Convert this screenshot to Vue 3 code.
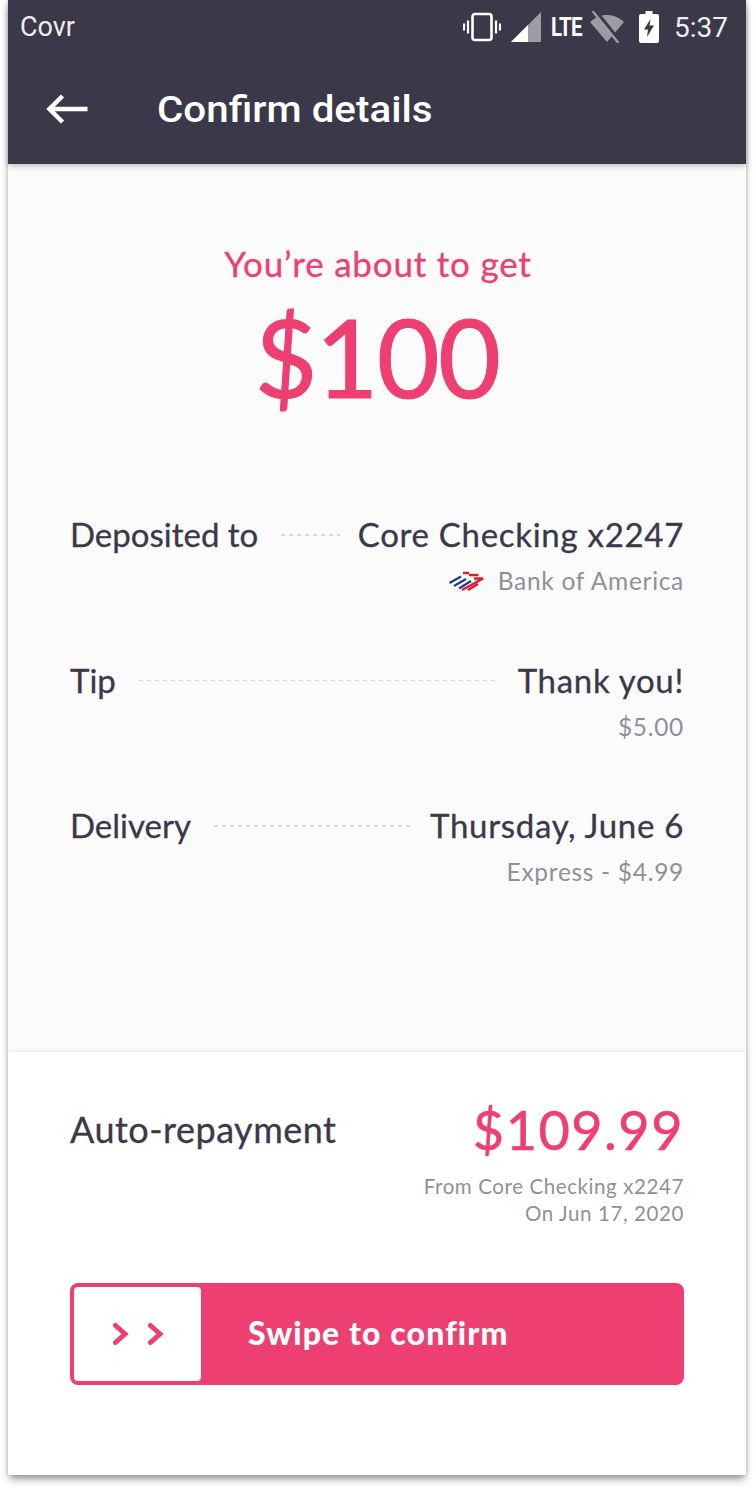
<script setup>
const rows = [
  { label: "Deposited to", value: "Core Checking x2247", sub: "Bank of America", bank: true },
  { label: "Tip", value: "Thank you!", sub: "$5.00" },
  { label: "Delivery", value: "Thursday, June 6", sub: "Express - $4.99" },
];
</script>

<template>
  <div class="page">
    <div class="screen">
      <header class="top">
        <div class="status">
          <span class="carrier">Covr</span>
          <div class="status-icons">
            <svg class="ic-vibrate" width="38" height="30" viewBox="0 0 38 30">
              <rect x="9.500" y="2" width="19" height="26" rx="2.500" fill="none" stroke="#fff" stroke-width="2.600" />
              <path d="M5 8.500v13M1 11.500v7M33 8.500v13M37 11.500v7" stroke="#fff" stroke-width="2.200" fill="none" />
            </svg>
            <svg class="ic-signal" width="30" height="30" viewBox="0 0 30 30">
              <path d="M0 30 30 0v30z" fill="#9c9ca6" />
              <path d="M0 30 17 13v17z" fill="#fff" />
            </svg>
            <span class="lte">LTE</span>
            <svg class="ic-wifi" width="36" height="32" viewBox="0 0 36 32">
              <path d="M1 11C6 6.500 12 4 18 4s12 2.500 17 7L18 31z" fill="#9c9ca6" />
              <path d="M6 0 30 30" stroke="#3a3849" stroke-width="4.500" />
              <path d="M3.500 0 29.500 32" stroke="#9c9ca6" stroke-width="2.400" />
            </svg>
            <svg class="ic-battery" width="20" height="32" viewBox="0 0 20 32">
              <path d="M6.500 0h7v3H18a2 2 0 0 1 2 2v25a2 2 0 0 1-2 2H2a2 2 0 0 1-2-2V5a2 2 0 0 1 2-2h4.500z" fill="#fff" />
              <path d="M11.500 8 5 18.500h4L8 26l7-11.500h-4.500z" fill="#3a3849" />
            </svg>
            <span class="clock">5:37</span>
          </div>
        </div>
        <div class="titlebar">
          <svg class="back" width="44" height="32" viewBox="0 0 44 32">
            <path d="M41.500 16H4M16.500 3 3.500 16l13 13" fill="none" stroke="#fff" stroke-width="4.500" />
          </svg>
          <h1>Confirm details</h1>
        </div>
      </header>

      <main class="details">
        <p class="about">You’re about to get</p>
        <p class="amount">$100</p>

        <div class="rows">
          <div v-for="row in rows" :key="row.label" class="row">
            <div class="row-main">
              <span class="row-label">{{ row.label }}</span>
              <i class="dots"></i>
              <span class="row-value">{{ row.value }}</span>
            </div>
            <div class="row-sub">
              <svg v-if="row.bank" class="bofa" width="37" height="20" viewBox="0 0 37 20">
                <path d="M1.500 12 13 5.500M6 15l12-7M11 17.500 23 10" stroke="#1f3a8f" stroke-width="2.200" fill="none" />
                <path d="M15 2h6M21 4h9.500M26 7.500h9L14 19M30 13l-10 6" stroke="#e31b2c" stroke-width="2.400" fill="none" />
              </svg>
              <span>{{ row.sub }}</span>
            </div>
          </div>
        </div>
      </main>

      <section class="repay">
        <div class="repay-head">
          <span class="repay-label">Auto-repayment</span>
          <span class="repay-amount">$109.99</span>
        </div>
        <p class="repay-note">From Core Checking x2247<br />On Jun 17, 2020</p>

        <div class="swipe">
          <div class="handle">
            <svg width="54" height="24" viewBox="0 0 54 24">
              <path d="M4.500 3.500 14 12l-9.500 8.500M39.500 3.500 49 12l-9.500 8.500" fill="none" stroke="#ee3f73" stroke-width="5" stroke-linecap="round" />
            </svg>
          </div>
          <span class="swipe-text">Swipe to confirm</span>
        </div>
      </section>
    </div>
  </div>
</template>

<style>
html,
body {
  background: #fff;
}
</style>

<style scoped>
.page {
  height: 1491px;
  padding: 0 8px;
  box-sizing: border-box;
  overflow: hidden;
}
.screen {
  height: 1475px;
  display: flex;
  flex-direction: column;
  background: #fff;
  box-shadow: 0 0 6px rgba(0, 0, 0, 0.14), 0 6px 8px -2px rgba(0, 0, 0, 0.4);
  font-family: Lato, "Noto Sans", sans-serif;
  color: #3a3849;
}

/* top bar */
.top {
  height: 164px;
  flex: none;
  background: #3a3849;
  color: #fff;
  font-family: Roboto, sans-serif;
  box-shadow: 0 2px 6px rgba(0, 0, 0, 0.25);
  position: relative;
}
.status {
  height: 54px;
  padding: 0 18px 0 12px;
  display: flex;
  align-items: center;
  justify-content: space-between;
}
.carrier {
  font-size: 27px;
  color: #eee;
}
.status-icons {
  display: flex;
  align-items: center;
}
.ic-signal {
  margin-left: 10px;
}
.lte {
  margin-left: 10px;
  font-size: 25px;
  font-weight: 700;
  letter-spacing: -1px;
  transform: scaleX(0.82);
  transform-origin: left;
  width: 29px;
}
.ic-wifi {
  margin-left: 9px;
}
.ic-battery {
  margin-left: 14px;
}
.clock {
  margin-left: 15px;
  font-size: 28px;
  color: #eee;
}
.titlebar {
  height: 110px;
  padding: 0 0 0 38px;
  display: flex;
  align-items: center;
}
.back {
  flex: none;
}
h1 {
  margin: 0 0 0 67px;
  font-size: 37px;
  font-weight: 500;
  transform: scaleX(1.09);
  transform-origin: left;
}

/* details */
.details {
  height: 888px;
  flex: none;
  background: #fbfbfb;
  padding: 0 62px;
  box-sizing: border-box;
}
.about {
  margin: 74px 0 0 2px;
  text-align: center;
  color: #ee3f73;
  font-size: 35px;
  line-height: 50px;
  letter-spacing: 0.800px;
  -webkit-text-stroke: 0.3px #ee3f73;
}
.amount {
  margin: 14px 0 0;
  text-align: center;
  color: #ee3f73;
  font-size: 108px;
  line-height: 108px;
  letter-spacing: -1.500px;
  -webkit-text-stroke: 1.200px #ee3f73;
}
.rows {
  margin-top: 101px;
  display: flex;
  flex-direction: column;
  gap: 39px;
}
.row {
  height: 106.500px;
}
.row-main {
  display: flex;
  align-items: center;
  font-size: 33px;
  line-height: 46px;
  -webkit-text-stroke: 0.3px #3a3849;
}
.row-value {
  letter-spacing: 0.700px;
}
.dots {
  flex: 1;
  height: 1.500px;
  margin: 2px 18px 0 23px;
  background: repeating-linear-gradient(90deg, #d8d8dc 0 4px, transparent 4px 8px);
}
.row-sub {
  margin-top: 6px;
  display: flex;
  align-items: center;
  justify-content: flex-end;
  color: #90909a;
  font-size: 24.500px;
  line-height: 36px;
  letter-spacing: 0.700px;
}
.bofa {
  margin-right: 13px;
}

/* repayment */
.repay {
  flex: 1;
  background: #fff;
  padding: 0 62px;
  box-shadow: 0 -1px 3px rgba(0, 0, 0, 0.08);
  position: relative;
}
.repay-head {
  margin-top: 44px;
  height: 66px;
  display: flex;
  align-items: center;
  justify-content: space-between;
}
.repay-label {
  font-size: 36px;
  letter-spacing: 0.500px;
  -webkit-text-stroke: 0.3px #3a3849;
}
.repay-amount {
  color: #ee3f73;
  font-size: 54px;
  letter-spacing: 1.500px;
  -webkit-text-stroke: 0.6px #ee3f73;
}
.repay-note {
  margin: 11px 0 0;
  text-align: right;
  color: #90909a;
  font-size: 20.500px;
  line-height: 27px;
  letter-spacing: 0.600px;
}
.swipe {
  margin-top: 56px;
  height: 102px;
  background: #ee3f73;
  border-radius: 8px;
  display: flex;
  align-items: center;
  padding: 4px;
  box-sizing: border-box;
}
.handle {
  width: 127px;
  height: 94px;
  background: #fff;
  border-radius: 4px;
  display: flex;
  align-items: center;
  justify-content: center;
}
.swipe-text {
  margin: -3px 0 0 47px;
  color: #fff;
  font-size: 32px;
  font-weight: 900;
  letter-spacing: 1.100px;
}
</style>
